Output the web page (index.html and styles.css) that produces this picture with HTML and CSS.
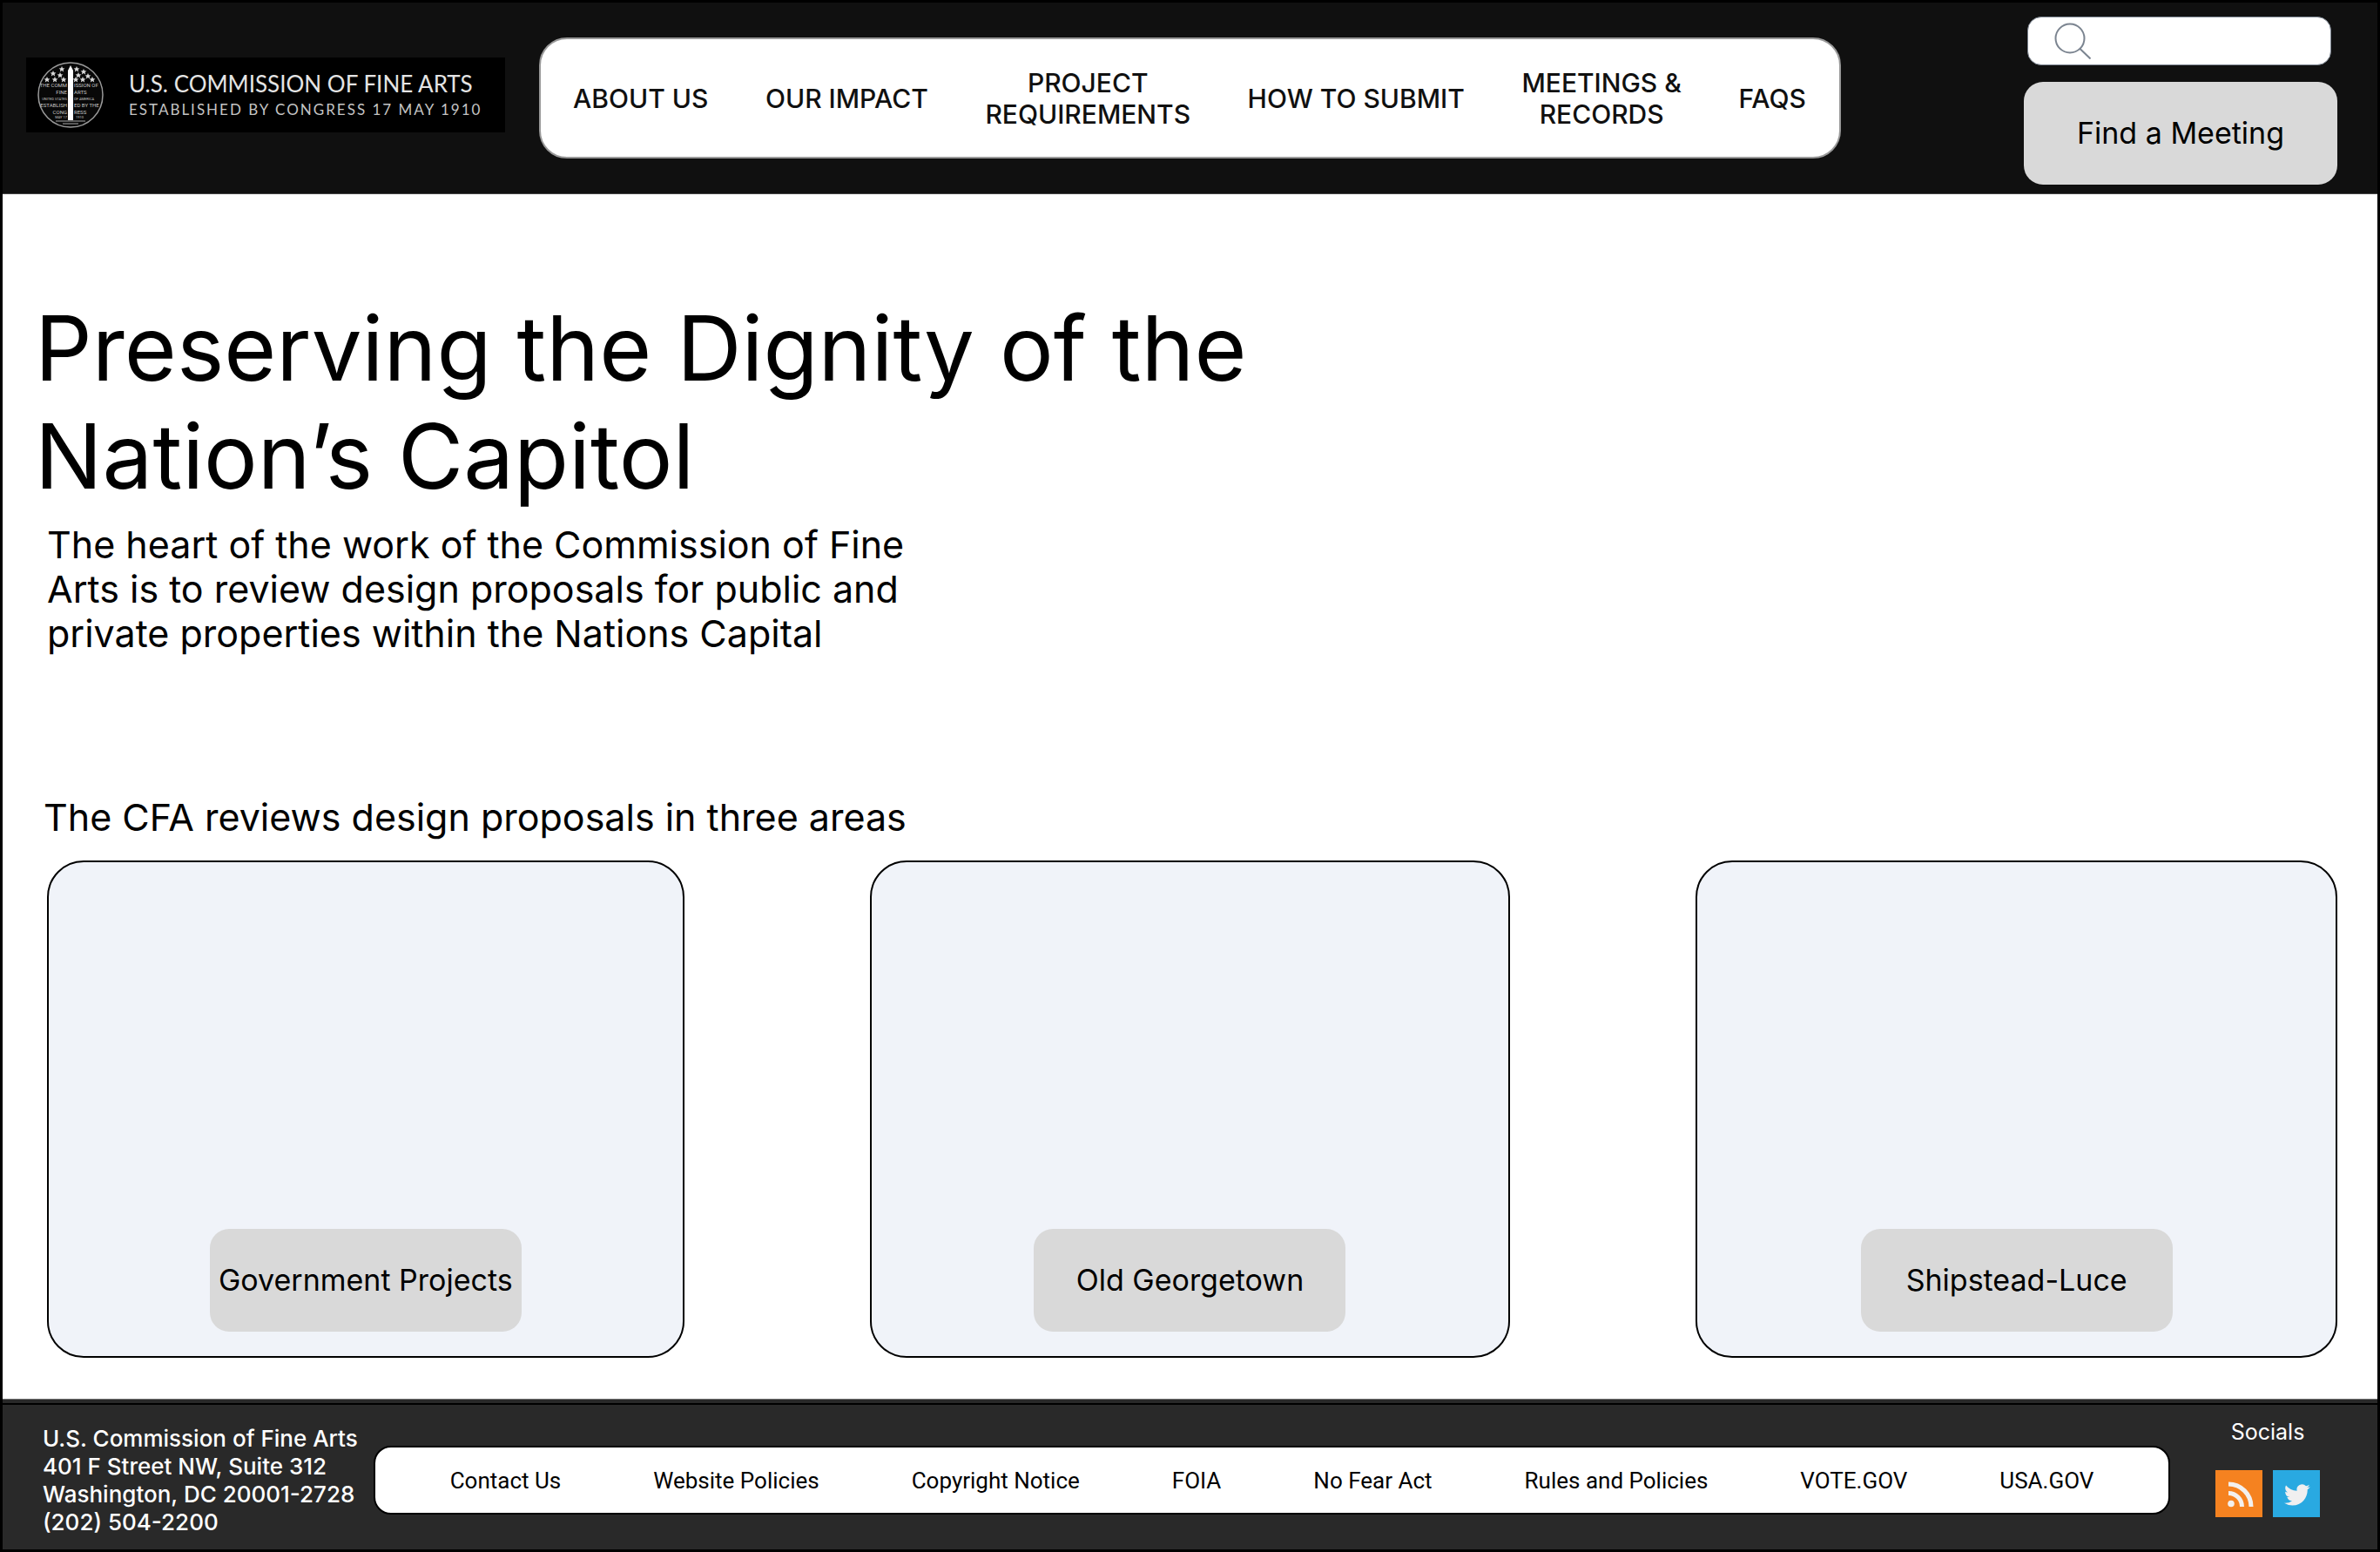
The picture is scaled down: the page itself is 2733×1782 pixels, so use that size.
FILE: index.html
```html
<!DOCTYPE html>
<html lang="en">
<head>
<meta charset="utf-8">
<title>U.S. Commission of Fine Arts</title>
<meta name="viewport" content="width=device-width, initial-scale=1">
<link rel="stylesheet" href="styles.css">
</head>
<body>
<div class="page">
  <header class="site-header">
    <a class="logo" href="#" aria-label="U.S. Commission of Fine Arts, home">
      <svg class="seal" viewBox="0 0 78 78" aria-hidden="true">
        <circle cx="39" cy="39" r="37" fill="#080808" stroke="#9a9a9a" stroke-width="1.5"/>
        <g fill="#d8d8d8">
          <path id="star" d="M29 6l1 2.2 2.4.2-1.8 1.6.6 2.4-2.2-1.3-2.2 1.3.6-2.4-1.8-1.6 2.4-.2z"/>
          <use href="#star" x="-10" y="5"/><use href="#star" x="-2" y="7"/><use href="#star" x="-17" y="12"/><use href="#star" x="-8" y="12"/><use href="#star" x="2" y="12"/>
          <use href="#star" x="17"/><use href="#star" x="25" y="3"/><use href="#star" x="19" y="7"/><use href="#star" x="30" y="8"/><use href="#star" x="16" y="12"/><use href="#star" x="24" y="12"/><use href="#star" x="35" y="12"/>
        </g>
        <g class="seal-text" fill="#c4c4c4">
          <text x="35" y="30" text-anchor="end">THE COMM</text><text x="43" y="30">ISSION OF</text>
          <text x="35" y="38" text-anchor="end">FINE</text><text x="43" y="38">ARTS</text>
          <text class="seal-long" x="35" y="45" text-anchor="end">UNITED STATES</text><text class="seal-long" x="43" y="45">OF AMERICA</text>
          <text x="35" y="53" text-anchor="end">ESTABLISH</text><text x="43" y="53">ED BY THE</text>
          <text x="35" y="61" text-anchor="end">CONG</text><text x="43" y="61">RESS</text>
          <text class="seal-long" x="35" y="66" text-anchor="end">MAY 17</text><text class="seal-long" x="45" y="66">1910</text>
        </g>
        <path d="M36 68V11l3-6 3 6v57z" fill="#fff"/>
        <path d="M22 69h34M30 72h18" stroke="#a8a8a8" stroke-width="1.2"/>
      </svg>
      <span class="logo-words">
        <span class="logo-name">U.S. COMMISSION OF FINE ARTS</span>
        <span class="logo-date">ESTABLISHED BY CONGRESS 17 MAY 1910</span>
      </span>
    </a>
    <nav class="main-nav" aria-label="Main">
      <a href="#">ABOUT US</a>
      <a href="#">OUR IMPACT</a>
      <a href="#">PROJECT<br>REQUIREMENTS</a>
      <a href="#">HOW TO SUBMIT</a>
      <a href="#">MEETINGS &amp;<br>RECORDS</a>
      <a href="#">FAQS</a>
    </nav>
    <div class="header-tools">
      <label class="search">
        <svg class="search-icon" viewBox="0 0 42 42" aria-hidden="true"><circle cx="18" cy="18" r="16.5"/><path d="M29.500 30l12 11.500"/></svg>
        <input class="search-input" type="search" aria-label="Search">
      </label>
      <button class="button" type="button">Find a Meeting</button>
    </div>
  </header>

  <main class="content">
    <h1 class="headline">Preserving the Dignity of the<br>Nation’s Capitol</h1>
    <p class="intro">The heart of the work of the Commission of Fine<br>Arts is to review design proposals for public and<br>private properties within the Nations Capital</p>
    <h2 class="areas-title">The CFA reviews design proposals in three areas</h2>
    <div class="areas">
      <section class="area"><button class="button" type="button">Government Projects</button></section>
      <section class="area"><button class="button" type="button">Old Georgetown</button></section>
      <section class="area"><button class="button" type="button">Shipstead-Luce</button></section>
    </div>
  </main>

  <footer class="site-footer">
    <div class="footer-row">
      <address class="address">U.S. Commission of Fine Arts<br>401 F Street NW, Suite 312<br>Washington, DC 20001-2728<br>(202) 504-2200</address>
      <nav class="footer-nav" aria-label="Footer">
        <a href="#">Contact Us</a>
        <a href="#">Website Policies</a>
        <a href="#">Copyright Notice</a>
        <a href="#">FOIA</a>
        <a href="#">No Fear Act</a>
        <a href="#">Rules and Policies</a>
        <a href="#">VOTE.GOV</a>
        <a href="#">USA.GOV</a>
      </nav>
      <div class="socials">
        <span>Socials</span>
        <div class="social-links">
          <a href="#" aria-label="RSS feed">
            <svg viewBox="0 0 54 54" aria-hidden="true"><rect width="54" height="54" fill="#f58220"/><g fill="none" stroke="#f3f0ee" stroke-width="5"><path d="M15 16A26 26 0 0 1 41 42"/><path d="M15 26.500A15.500 15.500 0 0 1 30.500 42"/></g><circle cx="18" cy="38.500" r="3.800" fill="#f3f0ee"/></svg>
          </a>
          <a href="#" aria-label="Twitter">
            <svg viewBox="0 0 54 54" aria-hidden="true"><rect width="54" height="54" fill="#29a9e1"/><path transform="translate(13 13.500) scale(1.240)" fill="#f0eff0" d="M23.950 4.570a10 10 0 0 1-2.820.770 4.960 4.960 0 0 0 2.160-2.720 9.900 9.900 0 0 1-3.120 1.190 4.920 4.920 0 0 0-8.390 4.480C7.690 8.090 4.070 6.130 1.640 3.160a4.820 4.820 0 0 0-.670 2.480c0 1.710.870 3.210 2.190 4.100a4.900 4.900 0 0 1-2.230-.620v.060a4.920 4.920 0 0 0 3.950 4.830 5 5 0 0 1-2.210.080 4.940 4.940 0 0 0 4.600 3.420A9.870 9.870 0 0 1 0 19.540a13.990 13.990 0 0 0 7.550 2.210c9.050 0 14-7.500 14-13.980 0-.210 0-.420-.020-.630a9.940 9.940 0 0 0 2.460-2.550z"/></svg>
          </a>
        </div>
      </div>
    </div>
  </footer>
</div>
</body>
</html>
```
FILE: styles.css
```css
* {
  box-sizing: border-box;
}

body {
  margin: 0;
  background: #fff;
  color: #000;
  font-family: Inter, "Liberation Sans", sans-serif;
}

a {
  color: inherit;
  text-decoration: none;
}

.page {
  display: flex;
  flex-direction: column;
  min-height: 100vh;
  border: 3px solid #000;
}

.site-header {
  display: flex;
  align-items: flex-start;
  padding: 16px 46px 10px 27px;
  border-bottom: 1px solid #444;
  background: #101010;
}

.logo {
  display: flex;
  align-items: center;
  gap: 28px;
  width: 550px;
  height: 86px;
  margin-top: 47px;
  padding-left: 12px;
  background: #000;
  color: #e4e4e4;
  font-family: Lato, sans-serif;
}

.seal {
  width: 78px;
  height: 78px;
}

.seal-text {
  font-family: Roboto, sans-serif;
  font-size: 6px;
}

.seal-long {
  font-size: 4px;
}

.logo-words {
  display: flex;
  flex-direction: column;
  gap: 4px;
}

.logo-name {
  font-size: 26px;
  line-height: 30px;
}

.logo-date {
  color: #c4c4c4;
  font-size: 17px;
  letter-spacing: 2px;
  line-height: 22px;
}

.main-nav {
  display: flex;
  align-items: center;
  justify-content: space-between;
  width: 1495px;
  height: 139px;
  margin: 24px 0 0 39px;
  padding: 0 38px 0 37px;
  border: 2px solid #999;
  border-radius: 32px;
  background: #fff;
  color: #101010;
  font-size: 30px;
  font-weight: 500;
  line-height: 36px;
  text-align: center;
}

.header-tools {
  display: flex;
  flex-direction: column;
  gap: 19px;
  width: 360px;
  margin-left: auto;
}

.search {
  display: flex;
  align-items: center;
  height: 56px;
  margin: 0 7px 0 4px;
  padding-left: 30px;
  border: 1px solid #7b8490;
  border-radius: 16px;
  background: #fff;
}

.search-icon {
  width: 42px;
  height: 42px;
  fill: none;
  stroke: #7b8490;
  stroke-width: 2;
}

.search-input {
  flex: 1;
  min-width: 0;
  border: 0;
  outline: 0;
  background: none;
  font: inherit;
  font-size: 26px;
}

.button {
  width: 358px;
  height: 118px;
  padding: 0;
  border: 0;
  border-radius: 22px;
  background: #d9d9d9;
  color: #000;
  font: inherit;
  font-size: 34px;
  line-height: 42px;
  white-space: nowrap;
}

.header-tools .button {
  width: 100%;
}

.content {
  flex: 1;
  padding: 115px 46px 46px 37px;
}

.headline {
  margin: 0 0 14px;
  font-size: 103px;
  font-weight: 400;
  line-height: 124px;
}

.intro,
.areas-title {
  font-size: 43px;
  font-weight: 400;
  line-height: 51px;
}

.intro {
  margin: 0 0 0 14px;
}

.areas-title {
  margin: 160px 0 24px 10px;
}

.areas {
  display: grid;
  grid-template-columns: 732fr 736fr 737fr;
  gap: 213px;
  margin-left: 14px;
}

.area {
  display: flex;
  align-items: flex-end;
  justify-content: center;
  height: 571px;
  padding-bottom: 28px;
  border: 2px solid #000;
  border-radius: 42px;
  background: #f0f3f9;
}

.site-footer {
  padding-top: 4px;
  border-top: 1px solid #777;
  background: #292929;
}

.footer-row {
  display: flex;
  align-items: center;
  height: 168px;
  padding: 7px 66px 0 46px;
  border-top: 2px solid #000;
}

.address {
  width: 380px;
  color: #fff;
  font-size: 26px;
  font-style: normal;
  font-weight: 500;
  line-height: 32px;
}

.footer-nav {
  display: flex;
  flex: 1;
  align-items: center;
  justify-content: center;
  gap: 106px;
  height: 79px;
  border: 2px solid #000;
  border-radius: 20px;
  background: #fff;
  font-family: Roboto, sans-serif;
  font-size: 26px;
}

.socials {
  display: flex;
  flex-direction: column;
  align-items: center;
  align-self: flex-start;
  gap: 29px;
  margin-left: 52px;
  padding-top: 9px;
  color: #fff;
  font-size: 25px;
  line-height: 30px;
}

.social-links {
  display: flex;
  gap: 12px;
}

.social-links svg {
  display: block;
  width: 54px;
  height: 54px;
}
```
